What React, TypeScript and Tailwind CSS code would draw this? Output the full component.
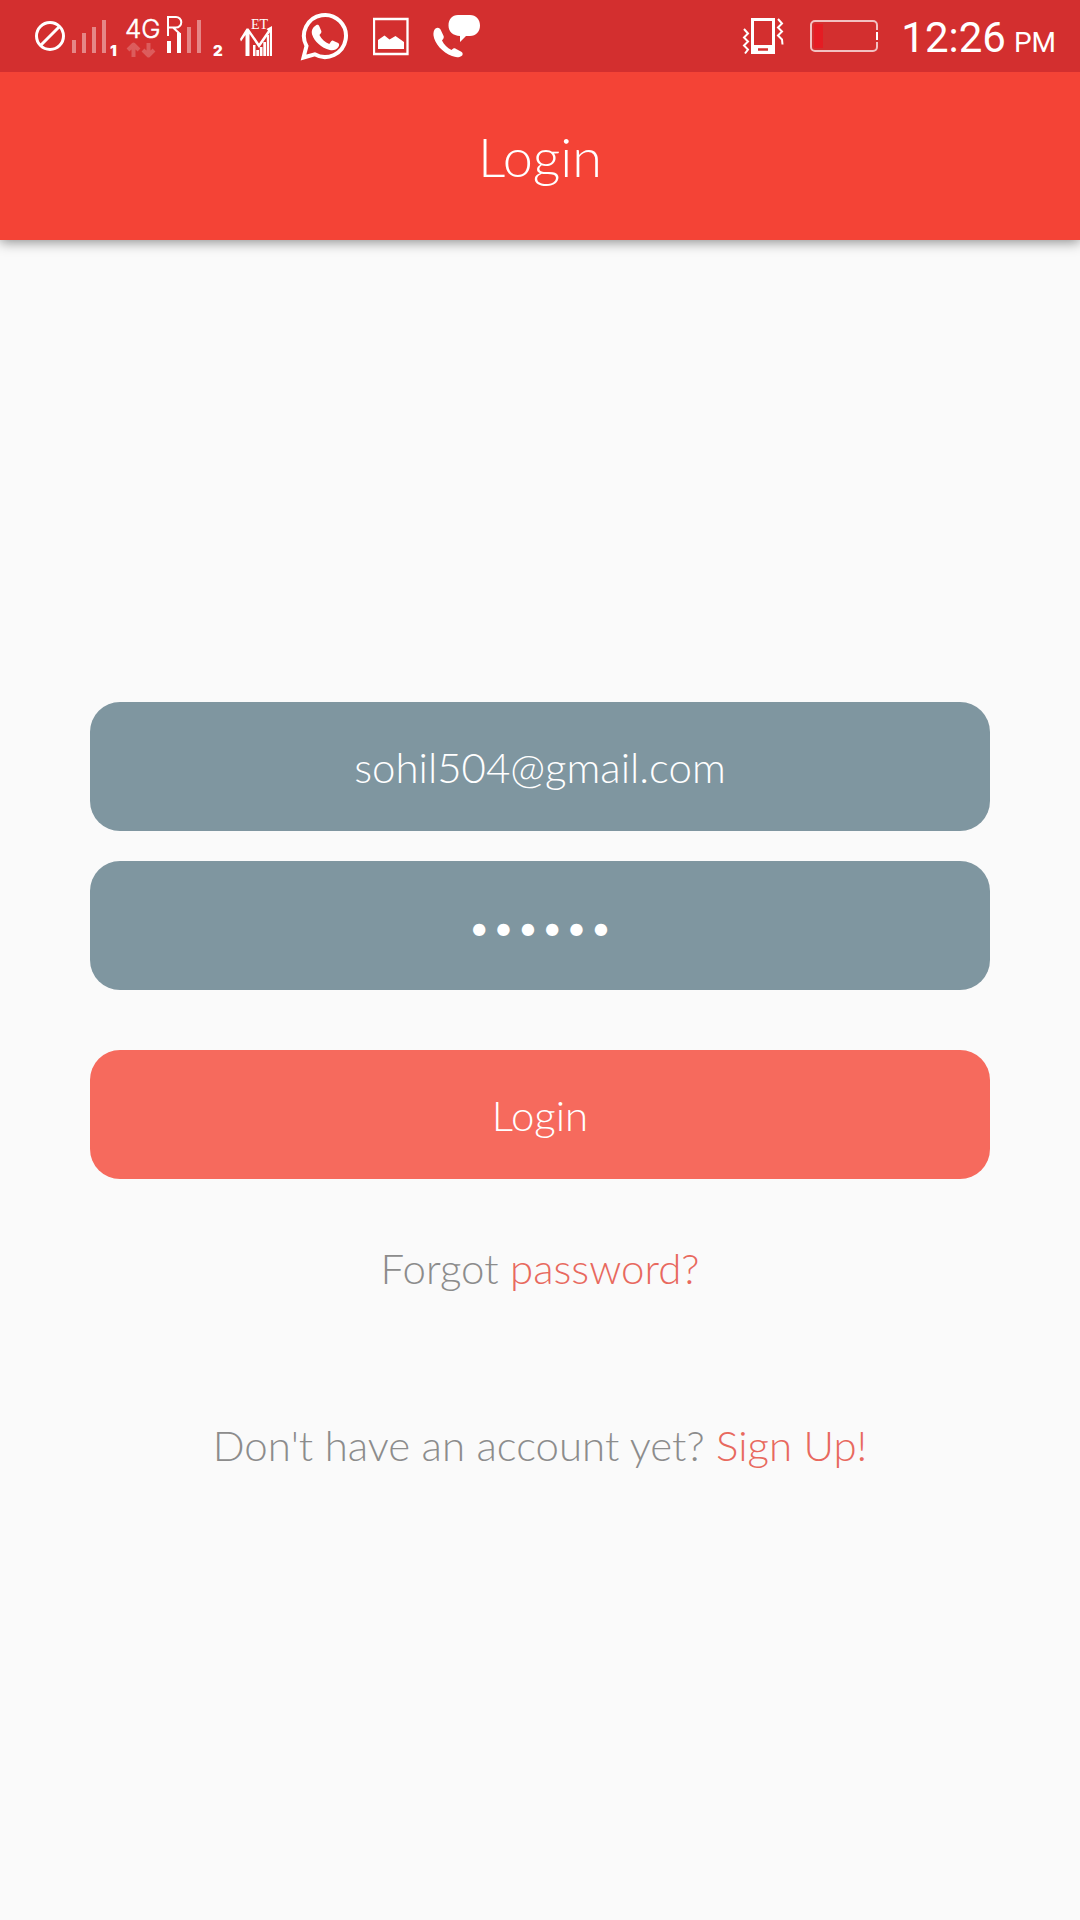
import React from "react";

function BlockedIcon() {
  return (
    <svg width="30" height="72" viewBox="35 0 30 72" fill="none" stroke="#fff" strokeWidth="3" aria-hidden="true">
      <circle cx="50" cy="36" r="13.5" />
      <path d="M40.5 45.5 59.5 26.5" />
    </svg>
  );
}

function SignalOne() {
  return (
    <svg width="49" height="72" viewBox="70 0 49 72" aria-hidden="true">
      <g stroke="#fff" strokeOpacity="0.42" strokeWidth="4" strokeLinecap="square">
        <path d="M74 42v9M84 35v16M94 29v22M104 22v29" />
      </g>
      <text x="110" y="56" fill="#fff" fontSize="15" fontWeight="900" fontFamily="Inter, sans-serif">1</text>
    </svg>
  );
}

function DataIcon() {
  return (
    <svg width="36" height="72" viewBox="124 0 36 72" aria-hidden="true">
      <text x="125" y="38" fill="#fff" stroke="#fff" strokeWidth="0.5" fontSize="26" fontWeight="300" fontFamily="Inter, sans-serif">4G</text>
      <g stroke="#fff" strokeOpacity="0.22" strokeWidth="4" fill="none" strokeLinejoin="round">
        <path d="M133.500 57V44M128 50l5.500-5.500L139 50" />
        <path d="M148.500 43v13M143 50l5.500 5.500L154 50" />
      </g>
    </svg>
  );
}

function SignalTwo() {
  return (
    <svg width="58" height="72" viewBox="165 0 58 72" aria-hidden="true">
      <path d="M168 36V17h8a5.300 5.300 0 0 1 5.300 5.300v0a5.300 5.300 0 0 1-5.300 5.300H168M173 27.500l7 6.500" fill="none" stroke="#fff" strokeWidth="2" />
      <g stroke="#fff" strokeWidth="4" strokeLinecap="square">
        <path d="M169 43v8M179 35v16" />
        <path d="M189 29v22M199 22v29" strokeOpacity="0.42" />
      </g>
      <text x="213" y="56" fill="#fff" fontSize="15" fontWeight="900" fontFamily="Inter, sans-serif">2</text>
    </svg>
  );
}

function MarketsIcon() {
  return (
    <svg width="38" height="72" viewBox="239 0 38 72" fill="#fff" aria-hidden="true">
      <text x="251" y="28.500" fontSize="14" fontFamily="'Liberation Serif', serif">ET</text>
      <path d="M245.500 56V35l-4.500 6.500-1-2.500 6.500-10.500h2L259 43.500l9-13-1.500-1.500 5.500-3v6l-1.500-.5L259 48l-9.500-14v22z" />
      <path d="M253 45h2.500v11H253zM256.300 50h2.700v6h-2.700zM259.800 47h2.700v9h-2.700zM263.300 42h2.700v14h-2.700zM266.800 35h2.200v21h-2.200zM269.800 29h2.200v27h-2.200z" />
    </svg>
  );
}

function WhatsAppIcon() {
  return (
    <svg width="50" height="72" viewBox="301 0 50 72" aria-hidden="true">
      <path d="M304.500 57.500l3-11.500a21 21 0 1 1 8.200 8.300z" fill="none" stroke="#fff" strokeWidth="4" strokeLinejoin="miter" />
      <path d="M317 25.300c1.800-.9 2.700-.4 3.300 1l2 4.700c.4 1-.1 2-1.900 4 2.300 4.200 5.600 7.200 9.900 8.900 1.900-2.700 2.700-3.800 3.900-3.200l4.900 2.400c1.500.8 1.300 2.600.1 4.200-1.700 2.200-4.500 3.500-8.400 2.700-8.600-2.200-15.300-8.300-17.700-15.500-1-3.700.4-7 3.900-9.200z" fill="#fff" />
    </svg>
  );
}

function ImageIcon() {
  return (
    <svg width="37" height="72" viewBox="373 0 37 72" aria-hidden="true">
      <path d="M374 19h33.500v35H374z" fill="none" stroke="#fff" strokeWidth="2.300" />
      <path d="M378 49v-9l6.500-4.500 5 4 6-3.500 8.500 6v7z" fill="#fff" />
    </svg>
  );
}

function PhoneChatIcon() {
  return (
    <svg width="48" height="72" viewBox="433 0 48 72" fill="#fff" aria-hidden="true">
      <path d="M458 15h12c6 0 10 4.500 10 10.500S476 36 470 36h-4l-6 6V36c-7-.3-11.500-4.500-11.500-10.500S452 15 458 15z" />
      <path d="M435.500 28.500c2.500-1.500 4.500-.5 5.500 2l2.600 5.500c.6 1.500-.1 2.700-1.600 4.500 2 4 5.300 7.500 9.500 9.500 1.600-1.500 2.700-2.200 4.200-1.300l5.600 3c2 1.200 1.700 3.300.2 4.300-2.500 1.700-6 1.500-9.500.1-9.500-3.600-17.500-12.600-18.500-20.600-.3-2.800.3-5.700 2-7z" />
    </svg>
  );
}

function VibrateIcon() {
  return (
    <svg width="45" height="72" viewBox="740 0 45 72" fill="none" stroke="#fff" aria-hidden="true">
      <path d="M750.500 19.500h21v33h-21z" strokeWidth="3" />
      <path d="M749 45h24v9h-24z" fill="#fff" stroke="none" />
      <path d="M756 49.500h10" stroke="#d32f2f" strokeWidth="2.500" />
      <path d="M742 29l4 4.500-4 4 4 4-4 4 4 4-3 4M776 19l4 4.500-4 4 4 4-4 4 4 4 .5 5" strokeWidth="2" />
    </svg>
  );
}

function BatteryIcon() {
  return (
    <svg width="70" height="72" viewBox="809 0 70 72" fill="none" aria-hidden="true">
      <path d="M814 24h9v24h-9z" fill="#e51c23" />
      <path d="M877 30v-5a4 4 0 0 0-4-4h-58a4 4 0 0 0-4 4v22a4 4 0 0 0 4 4h58a4 4 0 0 0 4-4v-5" stroke="#fff" strokeOpacity="0.7" strokeWidth="2" />
      <path d="M877 32v8" stroke="#fff" strokeWidth="2" />
    </svg>
  );
}

function StatusBar() {
  return (
    <div className="relative z-10 flex h-[72px] items-center justify-between bg-[#d32f2f] pl-[35px] pr-6 text-white">
      <div className="flex items-center">
        <div className="flex items-center gap-[5px]">
          <BlockedIcon />
          <SignalOne />
          <DataIcon />
          <SignalTwo />
        </div>
        <div className="flex items-center gap-[23px] pl-4">
          <MarketsIcon />
          <WhatsAppIcon />
          <ImageIcon />
          <PhoneChatIcon />
        </div>
      </div>
      <div className="flex items-center gap-[22px]">
        <VibrateIcon />
        <BatteryIcon />
        <time className="flex items-baseline gap-2 pt-2 font-[Roboto,sans-serif] text-[42px] leading-[50px] font-normal">
          12:26 <span className="text-[28px]">PM</span>
        </time>
      </div>
    </div>
  );
}

const fieldClass =
  "w-full rounded-[30px] bg-[#7f96a0] px-10 pt-[41px] pb-[39px] text-center text-[42px] leading-[49px] font-light text-white outline-none";

export default function App() {
  return (
    <div className="min-h-screen bg-[#fafafa] font-[Lato,sans-serif] font-light">
      <StatusBar />
      <header className="bg-[#f44336] pt-[53px] pb-[51px] text-center text-white shadow-[0_2px_12px_rgba(0,0,0,0.45)]">
        <h1 className="text-[54px] leading-[64px]">Login</h1>
      </header>
      <main className="px-[90px] pt-[462px] text-center text-[42px] leading-[50px] text-[#8c8c8c]">
        <form onSubmit={(e) => e.preventDefault()}>
          <div className="flex flex-col gap-[30px]">
            <input className={fieldClass} type="email" aria-label="Email" defaultValue="sohil504@gmail.com" />
            <input className={fieldClass} type="password" aria-label="Password" defaultValue="secret" />
          </div>
          <button
            type="submit"
            className="mt-[60px] w-full rounded-[30px] bg-[#f66a5d] pt-[41px] pb-[39px] leading-[49px] text-white"
          >
            Login
          </button>
        </form>
        <p className="mt-[64px]">
          Forgot <a href="#forgot" className="text-[#e8695e]">password?</a>
        </p>
        <p className="mt-[127px]">
          Don't have an account yet? <a href="#signup" className="text-[#e8695e]">Sign Up!</a>
        </p>
      </main>
    </div>
  );
}
